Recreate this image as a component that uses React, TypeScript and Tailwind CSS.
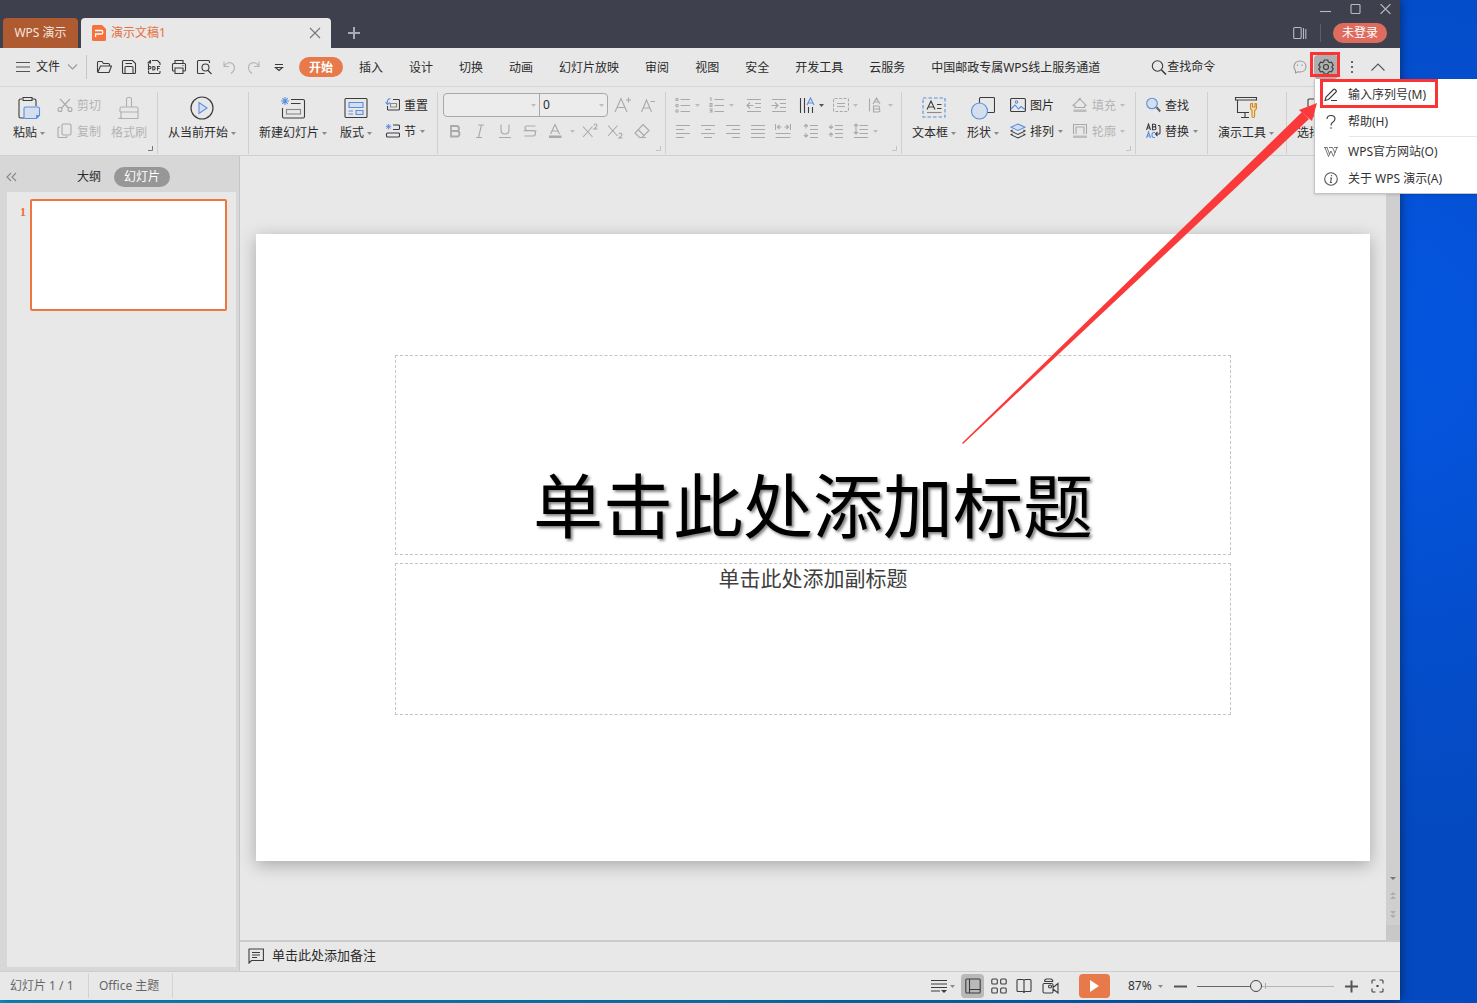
import type { ReactNode } from 'react';
import clsx from 'clsx';

const DARK = '#3c3c3c';
const GREY = '#a9a9a9';
const BLUE = '#5b8fe0';
const PALE = '#d5deec';

type IconProps = { w?: number; h?: number; color?: string; children: ReactNode };

function Icon({ w = 16, h = 16, color = DARK, children }: IconProps) {
  return (
    <svg width={w} height={h} viewBox={`0 0 ${w} ${h}`} fill="none" stroke={color} strokeWidth="1.1" className="shrink-0" aria-hidden="true">
      {children}
    </svg>
  );
}

function Caret({ dark, light }: { dark?: boolean; light?: boolean }) {
  return (
    <svg width="5" height="3" viewBox="0 0 5 3" className="shrink-0" aria-hidden="true">
      <path d="M0 0h5L2.500 3z" fill={dark ? '#555' : light ? '#bdbdbd' : '#8a8a8a'} />
    </svg>
  );
}

function Group({ className, corner, children }: { className: string; corner?: 'dark' | 'light'; children: ReactNode }) {
  return (
    <div className={clsx('relative flex h-full shrink-0 items-start', className)}>
      {children}
      {corner && (
        <svg width="5" height="5" viewBox="0 0 5 5" fill="none" className="absolute right-[5px] bottom-1" aria-hidden="true">
          <path d="M4.500 0v4.500H0" stroke={corner === 'dark' ? '#777' : '#c4c4c4'} />
        </svg>
      )}
      <span className="absolute top-0 right-0 h-[62px] w-px bg-[#cfcfcf]" />
    </div>
  );
}

function BigButton({ icon, label, caret = true, disabled }: { icon: ReactNode; label: string; caret?: boolean; disabled?: boolean }) {
  return (
    <button className={clsx('flex shrink-0 flex-col items-center pt-1', disabled && 'text-[#b4b4b4]')}>
      <span className="flex h-6 items-center">{icon}</span>
      <span className="flex h-[26px] items-center gap-[3px] whitespace-nowrap">
        {label}
        {caret && <Caret />}
      </span>
    </button>
  );
}

function SmallButton({ icon, label, caret, disabled }: { icon: ReactNode; label: string; caret?: boolean; disabled?: boolean }) {
  return (
    <button className={clsx('flex h-[26px] items-center gap-1 whitespace-nowrap', disabled && 'text-[#b4b4b4]')}>
      {icon}
      <span className="pt-[2px]">{label}</span>
      {caret && <Caret light={disabled} />}
    </button>
  );
}

function Tool({ label, className, children }: { label: string; className?: string; children: ReactNode }) {
  return (
    <button aria-label={label} className={clsx('flex h-[26px] shrink-0 items-center justify-center', className)}>
      {children}
    </button>
  );
}

const tabs = ['开始', '插入', '设计', '切换', '动画', '幻灯片放映', '审阅', '视图', '安全', '开发工具', '云服务', '中国邮政专属WPS线上服务通道'];

const quickTools = [
  { label: '打开', icon: <Icon><path d="M1.500 13V3.500q0-1 1-1h3.500l1.500 2h5q1 0 1 1V7M1.500 13.500h11.500l2.500-6.500H4.500L1.700 13.500" /></Icon> },
  { label: '保存', icon: <Icon><path d="M1.500 2.500q0-1 1-1h9l3 3v9q0 1-1 1h-11q-1 0-1-1zM4 14V8.500q0-1 1-1h6q1 0 1 1V14M4.500 4.500H11" /></Icon> },
  {
    label: '输出为PDF',
    icon: (
      <Icon>
        <path d="M6 1.500h5.500l2.500 2.500v2M2.500 7V5M2 4l2.500-2.500M4.500 1v3H1.500M2.500 12v1.500q0 1 1 1h9.500q1 0 1-1V12" />
        <path d="M2.500 11.500V7.500h1.500q1 0 1 1t-1 1.200H2.500M6.800 7.500v3.500h.8q1.500 0 1.500-1.750T7.600 7.500zM11.500 11.500v-4H14M11.500 9.500h2" />
      </Icon>
    ),
  },
  { label: '打印', icon: <Icon><path d="M4 4.500V1.500h8v3M3.500 12h-1q-1 0-1-1V5.500q0-1 1-1h11q1 0 1 1V11q0 1-1 1h-1M4 9h8v5.500H4zM11.500 6.500h1" /></Icon> },
  { label: '打印预览', icon: <Icon><path d="M13.500 4V2.500q0-1-1-1h-10q-1 0-1 1v11q0 1 1 1h6M12 11.500l3.500 3.500" /><circle cx="9.500" cy="8.500" r="3.500" /></Icon> },
  { label: '撤销', icon: <Icon color="#b5b5b5"><path d="M3 2.500v5h5M3 7.500C5 3.500 9.500 2.500 12 5s2 6.500-2 9.500" /></Icon> },
  { label: '恢复', icon: <Icon color="#b5b5b5"><path d="M13 2.500v5H8M13 7.500C11 3.500 6.500 2.500 4 5s-2 6.500 2 9.500" /></Icon> },
  { label: '自定义', icon: <Icon><path d="M4 5.500h8M4.500 8.500L8 11.500l3.500-3z" /></Icon> },
];

function TitleBar() {
  return (
    <header className="flex h-12 shrink-0 items-end bg-[#3e414d] pl-[3px]">
      <button className="h-[30px] w-[75px] rounded-t bg-[#b05a31] text-[#f5e6df]">WPS 演示</button>
      <div className="ml-[3px] flex h-[30px] w-[250px] items-center rounded-t bg-[#e8e8e8] pr-[10px] pl-[11px] text-[#e56f3c]">
        <svg width="14" height="16" viewBox="0 0 14 16" fill="none" aria-hidden="true">
          <path d="M1.500 0H10l4 4v10.500q0 1.500-1.500 1.500h-11Q0 16 0 14.500v-13Q0 0 1.500 0z" fill="#f4733d" />
          <path d="M3 5.500h6.500q1.200 0 1.200 1.200v1q0 1.300-1.200 1.300H3.600v3" stroke="#fff" strokeWidth="1.300" />
        </svg>
        <span className="ml-[5px] flex-1">演示文稿1</span>
        <button aria-label="关闭标签">
          <Icon w={12} h={12} color="#777"><path d="M1 1l10 10M11 1L1 11" /></Icon>
        </button>
      </div>
      <button aria-label="新建标签" className="ml-4 flex h-[30px] items-center">
        <Icon w={14} h={14} color="#a9abb2"><path d="M7 1v12M1 7h12" strokeWidth="2" /></Icon>
      </button>
      <div className="ml-auto flex h-12 flex-col items-end">
        <div className="flex h-[18px] items-center gap-[19px] pr-[9px]">
          <button aria-label="最小化"><Icon w={11} h={10} color="#b8bac0"><path d="M0 7.500h11" /></Icon></button>
          <button aria-label="最大化"><Icon w={11} h={10} color="#b8bac0"><rect x="1" y=".5" width="9" height="9" rx="1" /></Icon></button>
          <button aria-label="关闭"><Icon w={11} h={10} color="#b8bac0"><path d="M.5 0l10 10M10.500 0L.5 10" /></Icon></button>
        </div>
        <div className="flex h-[30px] items-center pr-[13px]">
          <button aria-label="侧边栏"><Icon w={14} h={14} color="#b8bac0"><rect x=".7" y="1.500" width="7.500" height="11" rx="1" /><path d="M10.500 2v11M12.800 3v10" /></Icon></button>
          <span className="ml-[13px] h-[18px] w-px bg-[#5b5e69]" />
          <button className="ml-3 h-5 w-[54px] rounded-full bg-[#de6c5e] text-white">未登录</button>
        </div>
      </div>
    </header>
  );
}

function MenuRow() {
  return (
    <nav className="flex h-[39px] shrink-0 items-center border-b border-[#d5d5d5] pl-4">
      <button className="flex items-center">
        <Icon w={14} h={12} color="#555"><path d="M0 1.500h14M0 6h14M0 10.500h14" /></Icon>
        <span className="ml-[6px]">文件</span>
        <span className="ml-[7px]"><Icon w={11} h={6} color="#999"><path d="M1 .5l4.500 4.500L10 .5" /></Icon></span>
      </button>
      <span className="ml-2 h-6 w-px bg-[#c4c4c4]" />
      <div className="ml-1 flex">
        {quickTools.map((t) => (
          <Tool key={t.label} label={t.label} className="w-[25px]">{t.icon}</Tool>
        ))}
      </div>
      <div className="ml-2 flex shrink-0">
        {tabs.map((t, i) =>
          i === 0 ? (
            <button key={t} className="mr-[3px] h-5 rounded-full bg-[#e8794a] px-[10px] pt-px font-bold text-white">{t}</button>
          ) : (
            <button key={t} className="h-5 px-[13px] pt-[2px] whitespace-nowrap">{t}</button>
          ),
        )}
      </div>
      <button className="ml-[38px] flex shrink-0 items-center whitespace-nowrap">
        <Icon><circle cx="6.500" cy="7" r="5.200" /><path d="M10.500 11l4.500 4.500" strokeWidth="1.600" /></Icon>
        查找命令
      </button>
      <div className="ml-auto flex items-center">
        <button aria-label="反馈">
          <Icon w={14} h={14} color="#999"><path d="M7 1c3.600 0 6 2.300 6 5.500S10.600 12 7 12c-1 0-1.500 0-2-.2L2.500 13v-2.500C1.300 9.400 1 8 1 6.500 1 3.300 3.400 1 7 1z" /><path d="M4.500 4.500v1.500M9 4.500v1.500" /></Icon>
        </button>
        <button aria-label="设置" className="ml-[7px] flex h-6 w-6 items-center justify-center rounded-sm bg-[#afafaf]">
          <Icon>
            <path d="M6.200 1h3.600l.5 1.800 1.300.8 1.900-.5 1.800 3.100L14 7.500v1.200l1.300 1.200-1.800 3-1.900-.4-1.300.8-.5 1.700H6.200l-.5-1.700-1.300-.8-1.900.4-1.800-3L2 8.700V7.500L.7 6.200l1.800-3.100 1.900.5 1.300-.8z" />
            <circle cx="8" cy="8" r="2.500" />
          </Icon>
        </button>
        <button aria-label="更多" className="ml-3">
          <svg width="4" height="14" viewBox="0 0 4 14" fill="#666" aria-hidden="true"><path d="M1 1h2v2H1zM1 6h2v2H1zM1 11h2v2H1z" /></svg>
        </button>
        <button aria-label="折叠功能区" className="mr-[15px] ml-[17px]">
          <Icon w={14} h={8} color="#555"><path d="M.5 7.500L7 1l6.500 6.500" /></Icon>
        </button>
      </div>
    </nav>
  );
}

function ClipboardGroup() {
  return (
    <Group className="w-[158px] pl-[13px]" corner="dark">
      <BigButton
        label="粘贴"
        icon={
          <Icon w={24} h={24}>
            <path d="M5 3H3.500Q2 3 2 4.500v16Q2 22 3.500 22H7M15 3h2.500Q19 3 19 4.500V10M6 1.500h9v3H6z" />
            <path d="M8.500 11h12.500q1.500 0 1.500 1.500v7l-3 3h-11Q7 22.500 7 21v-8.500Q7 11 8.500 11z" fill={PALE} stroke={BLUE} />
            <path d="M22.500 19h-3.500v3.500z" fill={BLUE} stroke="none" />
          </Icon>
        }
      />
      <div className="ml-3 flex flex-col">
        <SmallButton disabled label="剪切" icon={<Icon color={GREY}><path d="M3 2l9 9.500M13 2L4 11.500" /><circle cx="3" cy="12.500" r="2" /><circle cx="13" cy="12.500" r="2" /></Icon>} />
        <SmallButton disabled label="复制" icon={<Icon color={GREY}><rect x="5" y="1" width="9" height="11" rx="1.500" /><path d="M3 4H2Q1 4 1 5v8.500q0 1 1 1h7q1 0 1-1V13" /></Icon>} />
      </div>
      <div className="ml-[10px]">
        <BigButton disabled label="格式刷" caret={false} icon={<Icon w={22} h={24} color="#b0b0b0"><path d="M8.500 11V3q0-1.500 1.500-1.500h2q1.500 0 1.500 1.500v8M2 16v-3.500Q2 11 3.500 11h15q1.500 0 1.500 1.500V16M2 16h18M3 16v5.500L1.500 22.500H20V16" /></Icon>} />
      </div>
    </Group>
  );
}

function SlideGroups() {
  return (
    <>
      <Group className="w-[91px] pl-[10px]">
        <BigButton label="从当前开始" icon={<Icon w={24} h={24}><circle cx="12" cy="12" r="11" strokeWidth="1.200" /><path d="M9 6.500v11l8-5.500z" fill={PALE} stroke={BLUE} /></Icon>} />
      </Group>
      <Group className="w-[189px] gap-[13px] pl-[10px]">
        <BigButton
          label="新建幻灯片"
          icon={
            <Icon w={26} h={24}>
              <path d="M11 3.500h12q1.500 0 1.500 1.500v15.500q0 1.500-1.500 1.500H4q-1.500 0-1.500-1.500V12M11 7.500h9.500" />
              <rect x="6.500" y="13.500" width="14" height="4.500" stroke="#888" />
              <path d="M5 1v8M1 5h8M2.200 2.200l5.600 5.600M7.800 2.200L2.200 7.800" stroke={BLUE} />
            </Icon>
          }
        />
        <BigButton
          label="版式"
          icon={
            <Icon w={24} h={24}>
              <rect x="1" y="2.500" width="22" height="19" rx="1" />
              <path d="M5 6.500h14v5H5zM12 14.500h7v4h-7z" fill={PALE} stroke={BLUE} />
              <path d="M4.500 15H9M4.500 18H9" stroke={BLUE} />
            </Icon>
          }
        />
        <div className="flex flex-col">
          <SmallButton label="重置" icon={<Icon w={15}><path d="M8 2.500h5.500q1 0 1 1V12q0 1-1 1h-10q-1 0-1-1V9" /><path d="M5.500 6.500h6v3.500h-6z" stroke="#888" /><path d="M5.500 1.500Q1.500 2 2.500 7M.5 5l2 2.500 2.500-2" stroke={BLUE} /></Icon>} />
          <SmallButton label="节" caret icon={<Icon w={15}><path d="M8 2h5.500q1 0 1 1v2.500q0 1-1 1H8M2.500 14h11q1 0 1-1v-2q0-1-1-1h-11q-1 0-1 1v2q0 1 1 1z" /><path d="M3.500 1v5.500M.8 3.700h5.500M1.500 1.700l4 4M5.500 1.700l-4 4" stroke={BLUE} strokeWidth=".9" /></Icon>} />
        </div>
      </Group>
    </>
  );
}

function FontGroup() {
  return (
    <Group className="w-[228px] pl-1" corner="light">
      <div className="flex flex-col">
        <div className="flex h-[26px] items-center">
          <div className="ml-px flex h-6 w-[165px] rounded border border-[#a8a8a8] bg-[#ececec]">
            <label className="relative flex flex-1 items-center border-r border-[#a8a8a8]">
              <select aria-label="字体" className="h-full w-full appearance-none outline-none"><option></option></select>
              <span className="absolute right-[3px]"><Caret light /></span>
            </label>
            <label className="relative flex w-[67px] items-center">
              <select aria-label="字号" className="h-full w-full appearance-none pl-[3px] outline-none"><option>0</option></select>
              <span className="absolute right-[3px]"><Caret light /></span>
            </label>
          </div>
          <Tool label="增大字号" className="ml-[2px] w-[25px]"><Icon w={18} h={18} color={GREY}><path d="M1 16L7 2.500 13 16M3 11.500h8M14.500 1.500v5M12 4h5" /></Icon></Tool>
          <Tool label="减小字号" className="w-[25px]"><Icon color={GREY}><path d="M1.500 15L6.500 3l5 12M3.300 11h6.400M10.500 4.500H15" /></Icon></Tool>
        </div>
        <div className="flex">
          <Tool label="加粗" className="w-[25px]"><Icon color={GREY}><path d="M4 3h5.500Q12 3 12 5.500T9.500 8H4zM4 8h6q2.500 0 2.500 2.700T10 13.500H4z" strokeWidth="1.800" /></Icon></Tool>
          <Tool label="倾斜" className="w-[25px]"><Icon color={GREY}><path d="M6 2h6M4 14.500h6M9.500 2l-3 12.500" /></Icon></Tool>
          <Tool label="下划线" className="w-[25px]"><Icon color={GREY}><path d="M4 1.500V7q0 4 4 4t4-4V1.500M2 14.500h12" /></Icon></Tool>
          <Tool label="删除线" className="w-[25px]"><Icon color={GREY}><path d="M13.500 3H5Q3 3 3 5t2 2.500h6q2.500 0 2.500 2.700T11 13H2.500M1.500 7.800h13" /></Icon></Tool>
          <Tool label="字体颜色" className="w-[25px]"><Icon color={GREY}><path d="M3.500 11L8 1.500 12.500 11M5 8h6" /><path d="M2 12.500h12.500v2.500H2z" fill={GREY} stroke="none" /></Icon></Tool>
          <Tool label="字体颜色选项" className="w-[10px]"><Caret light /></Tool>
          <Tool label="上标" className="w-[25px]"><Icon color={GREY}><path d="M1 3.500L10.500 14M10.500 3.500L1 14M12 2.500Q12 1 13.500 1T15 2.500q0 1-3 3.500h3.500" /></Icon></Tool>
          <Tool label="下标" className="w-[25px]"><Icon color={GREY}><path d="M1 2.500L10.500 13M10.500 2.500L1 13M12 11.500q0-1.500 1.500-1.500t1.500 1.500q0 1-3 3.500h3.500" /></Icon></Tool>
          <Tool label="清除格式" className="w-[30px]"><Icon color={GREY}><path d="M9 1.500l6 6-7 7H5.500L1 10zM4 6.500l6 6M5.500 14.500H12" /></Icon></Tool>
        </div>
      </div>
    </Group>
  );
}

function ParagraphGroup() {
  return (
    <Group className="w-[236px] pl-[9px]" corner="light">
      <div className="flex flex-col">
        <div className="flex">
          <Tool label="项目符号" className="gap-1"><Icon color={GREY}><path d="M5.500 2.500H15M5.500 8.500H15M5.500 14.500H15" /><circle cx="2" cy="2.500" r="1.200" /><circle cx="2" cy="8.500" r="1.200" /><circle cx="2" cy="14" r="1.200" /></Icon><Caret light /></Tool>
          <Tool label="编号" className="ml-[9px] gap-1"><Icon color={GREY}><path d="M5.500 2.500H15M5.500 8.500H15M5.500 14.500H15M.8 1h1.200V4M.5 6.500H3V8H1v1.500h2.500M.5 12H3v3H.5M1 13.500h2" /></Icon><Caret light /></Tool>
          <Tool label="减少缩进" className="ml-3"><Icon color={GREY}><path d="M1 2.500h14M9 6.500h6M9 10.500h6M1 14.500h14M1 8.500h6.500M4 5.500L1 8.500l3 3" /></Icon></Tool>
          <Tool label="增加缩进" className="ml-[9px]"><Icon color={GREY}><path d="M1 2.500h14M9 6.500h6M9 10.500h6M1 14.500h14M.5 8.500H7M4 5.500l3 3-3 3" /></Icon></Tool>
          <Tool label="文字方向" className="ml-3 gap-1"><Icon><path d="M1.500 1v15M5.500 1v15M9.500 10v6M13.500 10v6" /><path d="M8 8l3.500-7L15 8M9 6h5" stroke={BLUE} /></Icon><Caret dark /></Tool>
          <Tool label="对齐文本" className="ml-[9px] gap-1"><Icon color={GREY}><rect x=".5" y="1.500" width="15" height="13" rx="1" strokeDasharray="3 1.500" /><path d="M4 6.500h8M4 9.500h8" /></Icon><Caret light /></Tool>
          <Tool label="文字排列" className="ml-[10px] gap-1"><Icon color={GREY}><path d="M1.500 1.500v13M5 7l3.500-6L12 7M6 5h5M5.500 9h4.500q1.500 0 1.500 1.500T10 12q2 0 2 1.500T10 15H5.500zM5.500 12H10" /></Icon><Caret light /></Tool>
        </div>
        <div className="flex gap-[9px]">
          <Tool label="左对齐"><Icon color={GREY}><path d="M1 2.500h14M1 6.500h8M1 10.500h14M1 14.500h8" /></Icon></Tool>
          <Tool label="居中"><Icon color={GREY}><path d="M1 2.500h14M5 6.500h6M1 10.500h14M4 14.500h8" /></Icon></Tool>
          <Tool label="右对齐"><Icon color={GREY}><path d="M1 2.500h14M7 6.500h8M1 10.500h14M7 14.500h8" /></Icon></Tool>
          <Tool label="两端对齐"><Icon color={GREY}><path d="M1 2.500h14M1 6.500h14M1 10.500h14M1 14.500h14" /></Icon></Tool>
          <Tool label="分散对齐"><Icon color={GREY}><path d="M.5 1v6M15.500 1v6M2.500 4h4M9.500 4h4M4.500 2L2.500 4l2 2M11.500 2l2 2-2 2M.5 10.500h15M.5 14.500h15" /></Icon></Tool>
          <Tool label="增大段距" className="ml-[3px]"><Icon color={GREY}><path d="M7 2.500h8M7 6.500h8M7 10.500h8M7 14.500h8M3 1.500v4M1 3.500l2-2 2 2M3 10v4M1 12l2 2 2-2" /></Icon></Tool>
          <Tool label="减小段距"><Icon color={GREY}><path d="M7 2.500h8M7 6.500h8M7 10.500h8M7 14.500h8M3 1.500v4M1 3.500l2 2 2-2M3 10v4M1 12l2-2 2 2" /></Icon></Tool>
          <Tool label="行距" className="gap-1"><Icon color={GREY}><path d="M6.500 2.500H15M6.500 6.500H15M6.500 10.500H15M1 14.500h14M3 1v10M1 3l2-2 2 2M1 9l2 2 2-2" /></Icon><Caret light /></Tool>
        </div>
      </div>
    </Group>
  );
}

function InsertGroups() {
  return (
    <>
      <Group className="w-[234px] pl-[10px]" corner="light">
        <BigButton
          label="文本框"
          icon={
            <Icon w={24} h={24}>
              <rect x="1" y="2" width="22" height="19" stroke={BLUE} strokeDasharray="3.500 2" />
              <path d="M5 13.500L9 5l4 8.500M6.500 11h5M15 8.500h4.500M15 12.500h4.500" />
              <path d="M5 16.500h14.500" stroke="#888" />
            </Icon>
          }
        />
        <div className="ml-[11px]">
          <BigButton label="形状" icon={<Icon w={24} h={24}><rect x="8.500" y="1.500" width="15" height="15" rx="1" /><circle cx="8.500" cy="15" r="8" fill={PALE} stroke={BLUE} /></Icon>} />
        </div>
        <div className="ml-[11px] flex flex-col">
          <SmallButton label="图片" icon={<Icon><rect x=".6" y="1.500" width="14.800" height="13" rx="1" /><path d="M1 12l4-4 3.500 4 2.500-2.500 4 3" stroke={BLUE} /><circle cx="6.500" cy="5" r="1.200" stroke={BLUE} /></Icon>} />
          <SmallButton label="排列" caret icon={<Icon><path d="M8 1l7 3.200-7 3.300-7-3.300z" fill={PALE} stroke={BLUE} /><path d="M2.500 7L1 8l7 3.500L15 8l-1.500-1M2.500 10.700L1 11.700 8 15l7-3.300-1.500-1" /></Icon>} />
        </div>
        <div className="ml-[9px] flex flex-col">
          <SmallButton disabled caret label="填充" icon={<Icon color={GREY}><path d="M3 10.500Q4 9 1 8.500L8 2l6 6.500q-2 0-1.500 2zM6 3.500L8.500 1" /><path d="M1.500 12.500h13v2.500h-13z" fill="#bdbdbd" stroke="none" /></Icon>} />
          <SmallButton disabled caret label="轮廓" icon={<Icon color={GREY}><path d="M1.500 11V1.500h13V11M4 11V4h8v7" /><path d="M1 12.500h14v2.500H1z" fill="#bdbdbd" stroke="none" /></Icon>} />
        </div>
      </Group>
      <Group className="w-[72px] pl-[10px]">
        <div className="flex flex-col">
          <SmallButton label="查找" icon={<Icon w={15}><circle cx="6" cy="6.500" r="5.300" fill={PALE} stroke={BLUE} /><path d="M10 10.500l4 4.500M11 10l3.500 4" stroke="#555" /></Icon>} />
          <SmallButton
            label="替换"
            caret
            icon={
              <Icon w={15}>
                <path d="M.5 7l2-6 2 6M1 5h3M6.500 1.200H8.500q1.300 0 1.300 1.300T8.500 3.800Q10 3.800 10 5.300T8.500 6.800h-2zM6.500 3.900h2M12 2.500h1q1 0 1 1V10q0 1-1 1h-3M11.500 9l-2 2 2 2" />
                <path d="M.5 15l2-6 2 6M1 13h3M9 9.500H7.500Q6 9.500 6 12t1.500 2.500H9" stroke={BLUE} />
              </Icon>
            }
          />
        </div>
      </Group>
      <Group className="w-[79px] pl-[10px]">
        <BigButton
          label="演示工具"
          icon={
            <Icon w={24} h={24}>
              <path d="M1.500 1.500h21V4h-21zM3.500 4v12.500H15M11 17v4M7 21.500h8" />
              <path d="M16.500 8v4q0 1.500 1.500 2.500v5.500q0 1.500 1.300 1.500t1.300-1.500v-5.500q1.900-1 1.900-2.500V8L21 7.500V11h-2.500V7.500z" fill="#f6dfb4" stroke="#cf8a1c" />
            </Icon>
          }
        />
      </Group>
      <div className="flex shrink-0 pl-[10px]">
        <BigButton label="选择" icon={<Icon w={20} h={24}><path d="M12 20H6q-1 0-1-1V4q0-1 1-1h12q1 0 1 1v6M12 11l7 4-4 2-2 4z" /></Icon>} />
      </div>
    </>
  );
}

function SidePanel() {
  return (
    <aside className="flex w-60 shrink-0 flex-col border-r border-[#c6c6c6] bg-[#d7d7d7]">
      <div className="flex h-9 items-center pt-[5px] pl-[6px]">
        <button aria-label="收起"><Icon w={11} h={10} color="#888"><path d="M5 1L1 5l4 4M10 1L6 5l4 4" /></Icon></button>
        <button className="ml-[60px]">大纲</button>
        <button className="ml-[13px] h-5 w-14 rounded-full bg-[#979797] text-white">幻灯片</button>
      </div>
      <div className="mr-[3px] mb-1 ml-[7px] flex flex-1 items-start bg-[#e8e8e8] pt-[7px]">
        <span className="w-[23px] pt-[5px] pl-[13px] font-['Liberation_Serif',serif] font-bold text-[#ee6f3a]">1</span>
        <button aria-label="幻灯片 1" className="h-28 w-[197px] rounded-xs border-2 border-[#ee7640] bg-white" />
      </div>
    </aside>
  );
}

function ScrollBar() {
  return (
    <div className="flex w-[14px] shrink-0 flex-col items-center justify-end bg-[#cfcfcf]">
      <svg width="6" height="3" viewBox="0 0 6 3" aria-hidden="true"><path d="M0 0h6L3 3z" fill="#777" /></svg>
      <svg width="6" height="8" viewBox="0 0 6 8" className="mt-3" aria-hidden="true"><path d="M0 3l3-3 3 3zM0 7l3-3 3 3z" fill="#adadad" /></svg>
      <svg width="6" height="8" viewBox="0 0 6 8" className="mt-[11px]" aria-hidden="true"><path d="M0 0h6L3 3zM0 4h6L3 7z" fill="#adadad" /></svg>
      <span className="mt-[6px] h-[15px] w-full bg-[#c8c8c8]" />
    </div>
  );
}

function Slide() {
  return (
    <div className="min-w-0 flex-1 px-4 pt-[78px]">
      <div className="aspect-[1114/627] bg-white px-[139px] pt-[121px] shadow-[0_4px_16px_rgba(0,0,0,0.28)]">
        <div className="flex h-[200px] items-end justify-center border border-dashed border-[#c4c4c4]">
          <h1 className="text-[70px] leading-[96px] whitespace-nowrap text-black [text-shadow:2px_2px_3px_rgba(0,0,0,0.5)]">单击此处添加标题</h1>
        </div>
        <div className="mt-2 h-[152px] border border-dashed border-[#c4c4c4] text-center">
          <p className="text-[21px] leading-[28px] text-[#404040]">单击此处添加副标题</p>
        </div>
      </div>
    </div>
  );
}

function StatusBar() {
  return (
    <footer className="flex h-[29px] shrink-0 items-center border-t border-[#cccccc] text-[#666]">
      <span className="w-[88px] pl-[10px]">幻灯片 1 / 1</span>
      <span className="flex h-6 w-[85px] items-center border-x border-[#d2d2d2] pl-[10px]">Office 主题</span>
      <div className="ml-auto flex items-center">
        <button aria-label="备注" className="flex items-center gap-[3px]">
          <Icon><path d="M0 2.500h16M0 6h16M0 9.500h16M0 13h9" /><path d="M10 12h6l-3 3z" fill={DARK} stroke="none" /></Icon>
          <Caret />
        </button>
        <button aria-label="普通视图" className="ml-[6px] flex h-6 w-[23px] items-center justify-center rounded bg-[#b9b9b9]">
          <Icon><rect x=".8" y="1" width="14.400" height="14" rx="1" /><path d="M4.500 1v14M4.500 11.500H15" /></Icon>
        </button>
        <button aria-label="幻灯片浏览" className="ml-[7px]">
          <Icon><rect x=".8" y="1" width="5.500" height="5" rx="1" /><rect x="9.700" y="1" width="5.500" height="5" rx="1" /><rect x=".8" y="10" width="5.500" height="5" rx="1" /><rect x="9.700" y="10" width="5.500" height="5" rx="1" /></Icon>
        </button>
        <button aria-label="阅读版式" className="ml-[9px]">
          <Icon><path d="M8 3Q8 1.500 6.500 1.500H2q-1 0-1 1v10q0 1 1 1h4.500q1.500 0 1.500 1.500 0-1.500 1.500-1.500H14q1 0 1-1v-10q0-1-1-1H9.500Q8 1.500 8 3zM8 3v12" /></Icon>
        </button>
        <button aria-label="录制" className="ml-[10px]">
          <Icon w={17}><path d="M2.500 3.500Q2.500 1 5 1h3.500q2 0 2.500 2.500M2.500 3.500h8.500M2 5.500h7.500q1.500 0 1.500 1.500v6.500q0 1.500-1.500 1.500H2.500Q1 15 1 13.500V7q0-1.500 1-1.500zM11 9.500l5-4V15l-5-4" /><circle cx="8" cy="8.500" r="1.500" /></Icon>
        </button>
        <button aria-label="放映" className="ml-5 flex h-6 w-[31px] items-center justify-center rounded bg-[#e8794a]">
          <svg width="9" height="12" viewBox="0 0 9 12" aria-hidden="true"><path d="M0 0l9 6-9 6z" fill="#fff" /></svg>
        </button>
        <button className="ml-[18px] flex w-[35px] items-center justify-between text-[#333]">87%<Caret /></button>
        <button aria-label="缩小" className="ml-[11px]"><Icon w={13} h={13} color="#555"><path d="M0 6.500h13" strokeWidth="2" /></Icon></button>
        <div className="relative ml-[10px] flex h-4 w-[137px] items-center">
          <span className="absolute top-[5px] left-[68px] h-[6px] w-px bg-[#aaa]" />
          <input
            type="range"
            aria-label="缩放"
            defaultValue={42}
            className="relative h-4 w-full appearance-none bg-transparent [&::-webkit-slider-runnable-track]:h-px [&::-webkit-slider-runnable-track]:bg-linear-to-r [&::-webkit-slider-runnable-track]:from-[#666] [&::-webkit-slider-runnable-track]:from-43% [&::-webkit-slider-runnable-track]:to-[#b5b5b5] [&::-webkit-slider-runnable-track]:to-43% [&::-webkit-slider-thumb]:-mt-[6px] [&::-webkit-slider-thumb]:h-3 [&::-webkit-slider-thumb]:w-3 [&::-webkit-slider-thumb]:appearance-none [&::-webkit-slider-thumb]:rounded-full [&::-webkit-slider-thumb]:border [&::-webkit-slider-thumb]:border-[#444] [&::-webkit-slider-thumb]:bg-[#e8e8e8]"
          />
        </div>
        <button aria-label="放大" className="ml-[11px]"><Icon w={13} h={13} color="#555"><path d="M0 6.500h13M6.500 .5v12" strokeWidth="2" /></Icon></button>
        <button aria-label="适应窗口" className="mr-4 ml-[13px]">
          <Icon w={13} h={14}><path d="M1 4.500V2q0-1 1-1h2.500M8.500 1H11q1 0 1 1v2.500M12 9.500V12q0 1-1 1H8.500M4.500 13H2q-1 0-1-1V9.500" /><path d="M5.500 6h2v2h-2z" fill={DARK} stroke="none" /></Icon>
        </button>
      </div>
    </footer>
  );
}

const menuItems = [
  { label: '输入序列号(M)', icon: <Icon w={14} h={14}><path d="M1 12.500l1-3.500 7.500-7.500q.7-.7 1.500 0l1 1q.8.800 0 1.500L4.500 11.500zM7 12.500h6" /></Icon> },
  { label: '帮助(H)', icon: <Icon w={14} h={16}><path d="M3 5Q3 1.500 7 1.500T11 5q0 1.700-2 3-2 1-2 3.500" /><circle cx="7" cy="14" r=".8" fill={DARK} stroke="none" /></Icon> },
  { label: 'WPS官方网站(O)', icon: <Icon w={14} h={14} color="#555"><path d="M0 2.500h3.500M1 2.500l3.500 9L7 6l2.500 5.500 3.500-9M3 2.500L5.500 9M5 2.500h3.500L11 8M10 2.500h4" strokeWidth=".8" /></Icon> },
  { label: '关于 WPS 演示(A)', icon: <Icon w={14} h={14} color="#555"><circle cx="7" cy="7" r="6.300" /><path d="M6 6h1.500l-1 4.500H8M7.500 3v1.300" /></Icon> },
];

function SettingsMenu() {
  return (
    <div className="absolute top-[79px] -right-[77px] w-[163px] border-b border-l border-[#c4c4c4] bg-white pt-[2px] pb-[1px] text-[#333] shadow-sm">
      {menuItems.map((m, i) => (
        <div key={m.label}>
          {i === 2 && <div className="my-px ml-[34px] h-px bg-[#e6e6e6]" />}
          <button className="flex h-[27px] w-full items-center pl-[9px] whitespace-nowrap">
            {m.icon}
            <span className="ml-[10px]">{m.label}</span>
          </button>
        </div>
      ))}
    </div>
  );
}

function Annotations() {
  return (
    <>
      <div className="pointer-events-none absolute top-[52px] right-[60px] h-[25px] w-[30px] border-3 border-[#fa3434]" />
      <div className="pointer-events-none absolute top-[79px] -right-[38px] h-[29px] w-[118px] border-3 border-[#fa3434]" />
      <svg width="356" height="341" viewBox="0 0 356 341" className="pointer-events-none absolute top-[103px] right-[82px]" aria-hidden="true">
        <path d="M0 340L340 9l7 7L1 341z" fill="#fa3a3a" />
        <path d="M355 0L337 7l13 11z" fill="#fa3a3a" />
      </svg>
    </>
  );
}

export default function App() {
  return (
    <div className="flex h-screen flex-col overflow-hidden bg-[#0449bf] bg-[radial-gradient(circle_500px_at_93%_34%,#0556e2,#0449bf)] font-['Noto_Sans','Noto_Sans_CJK_SC',sans-serif] text-xs text-[#2b2b2b]">
      <div className="flex min-h-0 flex-1 pr-[77px]">
        <div className="relative flex min-w-0 flex-1 flex-col bg-[#e8e8e8] shadow-[0_0_10px_rgba(0,0,0,0.5)]">
          <TitleBar />
          <MenuRow />
          <div className="flex h-[69px] shrink-0 overflow-hidden border-b border-[#cfcfcf] pt-[5px]">
            <ClipboardGroup />
            <SlideGroups />
            <FontGroup />
            <ParagraphGroup />
            <InsertGroups />
          </div>
          <div className="flex min-h-0 flex-1">
            <SidePanel />
            <main className="flex min-w-0 flex-1 flex-col">
              <div className="flex min-h-0 flex-1">
                <Slide />
                <ScrollBar />
              </div>
              <div className="flex h-[31px] shrink-0 items-center gap-2 border-t-2 border-[#cbcbcb] pb-[2px] pl-2 text-[13px]">
                <Icon><path d="M.6 1h14.800v11.500H3.500L1 15V1M4 4.500h8M4 7h8M4 9.500h5" /></Icon>
                单击此处添加备注
              </div>
            </main>
          </div>
          <StatusBar />
          <SettingsMenu />
          <Annotations />
        </div>
      </div>
      <div className="h-[3px] shrink-0 bg-linear-to-r from-[#0a9bd6] via-[#0786c4] via-50% to-[#0449bf]" />
    </div>
  );
}
